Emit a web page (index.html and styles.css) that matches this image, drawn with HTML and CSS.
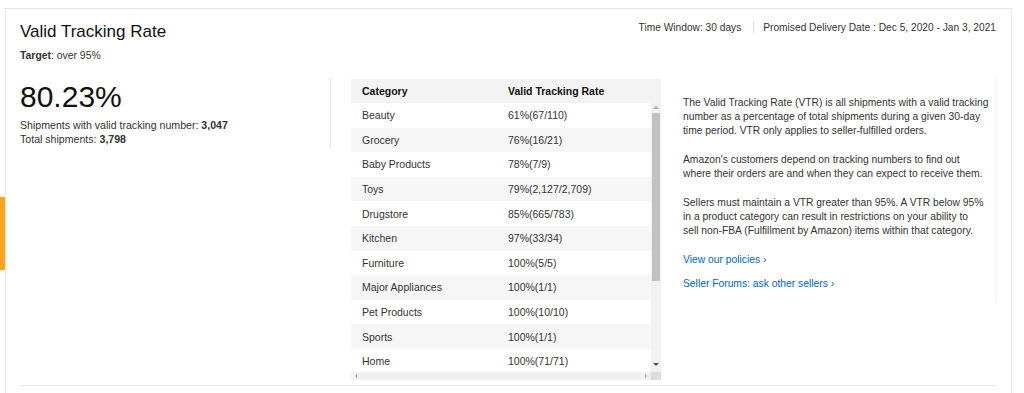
FILE: index.html
```html
<!DOCTYPE html>
<html lang="en">
<head>
  <meta charset="UTF-8">
  <meta name="viewport" content="width=device-width, initial-scale=1.0">
  <title>Valid Tracking Rate</title>
  <link rel="stylesheet" href="styles.css">
</head>
<body>

  <div class="side-tab"></div>

  <div class="card">
    <div class="card-head">
      <div>
        <h2 class="title">Valid Tracking Rate</h2>
        <div class="target"><b>Target</b>: over 95%</div>
      </div>
      <div class="meta">
        <span>Time Window: 30 days</span>
        <span class="sep"></span>
        <span>Promised Delivery Date : Dec 5, 2020 - Jan 3, 2021</span>
      </div>
    </div>

    <div class="card-body">
      <div class="summary">
        <div class="rate">80.23%</div>
        <div class="stat">Shipments with valid tracking number: <b>3,047</b></div>
        <div class="stat">Total shipments: <b>3,798</b></div>
      </div>

      <div class="table-box">
        <div class="t-row t-head">
          <span class="c1">Category</span>
          <span class="c2">Valid Tracking Rate</span>
        </div>
        <div class="t-scroll">
          <div class="t-rows">
            <div class="t-row"><span class="c1">Beauty</span><span class="c2">61%(67/110)</span></div>
            <div class="t-row"><span class="c1">Grocery</span><span class="c2">76%(16/21)</span></div>
            <div class="t-row"><span class="c1">Baby Products</span><span class="c2">78%(7/9)</span></div>
            <div class="t-row"><span class="c1">Toys</span><span class="c2">79%(2,127/2,709)</span></div>
            <div class="t-row"><span class="c1">Drugstore</span><span class="c2">85%(665/783)</span></div>
            <div class="t-row"><span class="c1">Kitchen</span><span class="c2">97%(33/34)</span></div>
            <div class="t-row"><span class="c1">Furniture</span><span class="c2">100%(5/5)</span></div>
            <div class="t-row"><span class="c1">Major Appliances</span><span class="c2">100%(1/1)</span></div>
            <div class="t-row"><span class="c1">Pet Products</span><span class="c2">100%(10/10)</span></div>
            <div class="t-row"><span class="c1">Sports</span><span class="c2">100%(1/1)</span></div>
            <div class="t-row"><span class="c1">Home</span><span class="c2">100%(71/71)</span></div>
          </div>
          <div class="vbar">
            <span class="arrow up"></span>
            <span class="thumb"></span>
            <span class="arrow down"></span>
          </div>
        </div>
        <div class="hbar">
          <div class="htrack">
            <span class="arrow left"></span>
            <span class="arrow right"></span>
          </div>
          <span class="corner"></span>
        </div>
      </div>

      <div class="about">
        <p>The Valid Tracking Rate (VTR) is all shipments with a valid tracking<br>
          number as a percentage of total shipments during a given 30-day<br>
          time period. VTR only applies to seller-fulfilled orders.</p>
        <p>Amazon's customers depend on tracking numbers to find out<br>
          where their orders are and when they can expect to receive them.</p>
        <p>Sellers must maintain a VTR greater than 95%. A VTR below 95%<br>
          in a product category can result in restrictions on your ability to<br>
          sell non-FBA (Fulfillment by Amazon) items within that category.</p>
        <a href="#" class="link">View our policies ›</a>
        <a href="#" class="link">Seller Forums: ask other sellers ›</a>
      </div>
    </div>

    <div class="card-foot"></div>
  </div>

</body>
</html>
```

FILE: styles.css
```css
body {
  margin: 0;
  background-color: #fff;
  color: #111;
  font-family: "Liberation Sans", Arial, sans-serif;
  height: 393px;
  overflow: hidden;
}
.side-tab {
  position: absolute;
  left: 0;
  top: 197px;
  width: 5px;
  height: 73px;
  background-color: #ffa41c;
}
.card {
  margin: 8px 12px 0 5px;
  border: 1px solid #e7e7e7;
  border-bottom: none;
  padding: 12px 14px 0 14px;
  height: 372px;
}
.card-head {
  display: flex;
  justify-content: space-between;
  align-items: flex-start;
}
.title {
  margin: 0;
  font-size: 17px;
  font-weight: normal;
  line-height: 22px;
}
.target {
  margin-top: 7px;
  font-size: 10.4px;
  color: #333;
}
.meta {
  display: flex;
  align-items: center;
  font-size: 10.2px;
  color: #333;
  padding-right: 1px;
}
.sep {
  width: 1px;
  height: 12px;
  background-color: #ddd;
  margin: 0 9px 0 12px;
}

.card-body {
  display: flex;
  align-items: flex-start;
  margin-top: 14px;
}
.summary {
  width: 310px;
  border-right: 1px solid #e7e7e7;
  padding-top: 2px;
  padding-bottom: 4px;
  margin-top: 3px;
}
.rate {
  font-size: 30px;
  line-height: 34px;
  margin-bottom: 4px;
}
.stat {
  font-size: 10.6px;
  line-height: 14px;
  color: #333;
}

.table-box {
  width: 310px;
  margin-left: 20px;
  margin-top: 4px;
  font-size: 10.5px;
  color: #333;
}
.t-row {
  display: flex;
  align-items: center;
  height: 24.6px;
  padding-left: 11px;
}
.t-head {
  background-color: #f3f3f3;
  font-weight: bold;
  color: #111;
  height: 24px;
}
.c1 {
  width: 146px;
}
.t-scroll {
  display: flex;
  height: 269px;
  overflow: hidden;
}
.t-rows {
  flex: 1;
}
.t-rows .t-row:nth-child(even) {
  background-color: #f6f6f6;
}
.vbar {
  width: 10px;
  background-color: #f1f1f1;
  display: flex;
  flex-direction: column;
  align-items: center;
}
.thumb {
  width: 8px;
  height: 168px;
  background-color: #c1c1c1;
}
.arrow {
  width: 0;
  height: 0;
  border: 3px solid transparent;
}
.arrow.up {
  border-bottom-color: #a3a3a3;
  border-top-width: 0;
  margin: 3px 0 4px;
}
.arrow.down {
  border-top-color: #505050;
  border-bottom-width: 0;
  margin-top: auto;
  margin-bottom: 6px;
}
.hbar {
  display: flex;
  height: 8px;
}
.htrack {
  flex: 1;
  background-color: #f1f1f1;
  display: flex;
  align-items: center;
  justify-content: space-between;
  padding: 0 4px;
}
.arrow.left {
  border-right-color: #a3a3a3;
  border-width: 2px 2px 2px 0;
}
.arrow.right {
  border-left-color: #a3a3a3;
  border-width: 2px 0 2px 2px;
}
.corner {
  width: 10px;
  background-color: #dcdcdc;
}

.about {
  width: 312px;
  margin-left: 22px;
  padding-top: 21px;
  padding-bottom: 2px;
  border-right: 1px solid #f6f6f6;
  font-size: 10.3px;
  line-height: 14px;
  color: #333;
  white-space: nowrap;
}
.about p {
  margin: 0 0 15px;
}
.link {
  display: block;
  color: #0066c0;
  text-decoration: none;
  margin-bottom: 10px;
}

.card-foot {
  margin-top: 5px;
  border-top: 1px solid #eaeaea;
}
```
